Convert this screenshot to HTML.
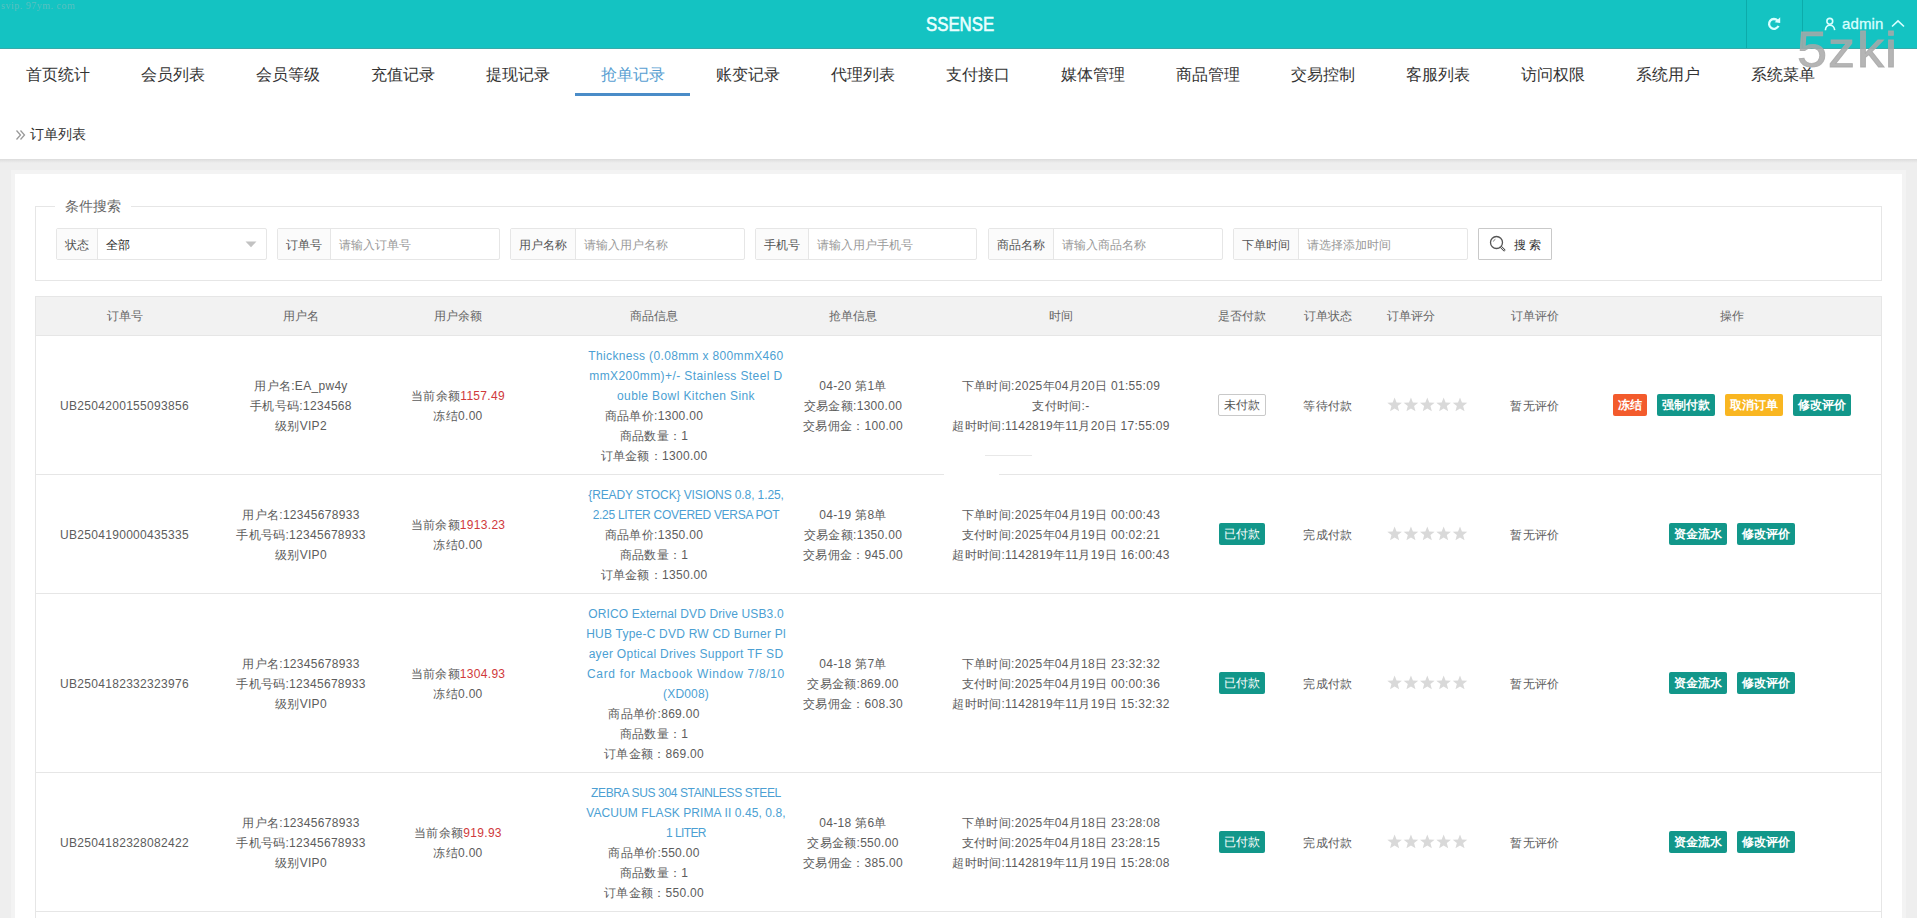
<!DOCTYPE html>
<html><head><meta charset="utf-8"><title>SSENSE</title>
<style>
*{box-sizing:border-box;margin:0;padding:0}
html,body{width:1917px;height:918px;overflow:hidden}
body{position:relative;background:#eeeeee;font-family:"Liberation Sans",sans-serif;color:#666;font-size:12px}
.abs{position:absolute}
#hdr{position:absolute;left:0;top:0;width:1917px;height:49px;background:#14c3c2;border-bottom:1px solid #38aaa9;z-index:1}
#hdr .title{position:absolute;left:0;top:0;width:1917px;text-align:center;line-height:48px;color:#eaffff;font-size:20px}
#hdr .title span{display:inline-block;transform:translate(1.5px,0px) scaleX(0.84);-webkit-text-stroke:0.6px #eaffff}
#hdr .vl{position:absolute;top:0;width:1px;height:48px;background:#0cabaa}
#hdr .admin{position:absolute;left:1842px;top:14px;font-size:15px;line-height:20px;color:#d9ffff;letter-spacing:0.1px;-webkit-text-stroke:0.3px #d9ffff}
#wm1{z-index:2;position:absolute;left:1795px;top:22.5px;width:120px;height:60px;font-size:50.5px;line-height:54px;color:rgba(168,168,168,0.85);-webkit-text-stroke:0.9px rgba(168,168,168,0.85)}
#wm1 span{position:absolute;top:0;display:block;transform:scaleX(1.07);transform-origin:0 0}
#wm0{position:absolute;left:1px;top:0px;font-size:10px;line-height:12px;color:rgba(150,190,190,0.55);font-family:"Liberation Serif",serif;letter-spacing:0.5px}
#nav{position:absolute;left:0;top:48px;width:1917px;height:111px;background:#fff}
#nav .it{position:absolute;top:0;width:115px;height:48px;text-align:center;font-size:16px;line-height:54px;color:#333}
#nav .it.on{color:#5a9fd2}
#nav .ul{position:absolute;left:575px;top:45px;width:115px;height:3px;background:#4a8cc8}
#bc{position:absolute;left:30px;top:125px;font-size:14px;line-height:18px;color:#333}
#bc .arr{color:#999;font-size:13px;margin-right:5px}
#shadow{position:absolute;left:0;top:159px;width:1917px;height:4px;background:linear-gradient(#dcdcdc,#eee)}
#card{position:absolute;left:15px;top:174px;width:1887px;height:760px;background:#fff;box-shadow:0 0 0 4px #f3f3f3}
#fs{position:absolute;left:35px;top:206px;width:1847px;height:75px;border:1px solid #e6e6e6}
#legend{position:absolute;left:55px;top:197px;padding:0 10px;background:#fff;font-size:14px;line-height:18px;color:#666}
.grp{position:absolute;top:228px;height:32px;border:1px solid #e6e6e6;border-radius:2px;background:#fff}
.grp .lb{position:absolute;left:0;top:0;height:30px;padding-top:1px !important;background:#fbfbfb;border-right:1px solid #e6e6e6;line-height:30px;padding:0 8px;color:#555;font-size:12px;white-space:nowrap}
.grp .ph{position:absolute;top:1px;height:30px;line-height:30px;color:#999;font-size:12px;white-space:nowrap}
#btn{position:absolute;left:1478px;top:228px;width:74px;height:32px;border:1px solid #c9c9c9;border-radius:1px;background:#fff;color:#333}
#tbl{position:absolute;left:35px;top:296px;width:1847px;height:640px;border:1px solid #e6e6e6;border-bottom:none}
#th{position:absolute;left:35px;top:296px;width:1847px;height:40px;background:#f2f2f2;border:1px solid #e6e6e6}
.hd{position:absolute;top:297px;height:38px;line-height:38px;text-align:center;color:#666;font-size:12px;white-space:nowrap}
.hl{position:absolute;left:35px;width:1847px;height:1px;background:#e6e6e6}
.row{position:absolute;left:0;width:1917px}
.c{position:absolute;top:1px;height:100%;display:flex;flex-direction:column;justify-content:center;align-items:center;text-align:center;line-height:20px;white-space:nowrap;letter-spacing:0.3px;color:#5c5c5c}
.red{color:#d0393b}
.c.nb{top:0}
.ttl{color:#4c9fd3}
.btn{display:inline-block;height:22px;line-height:22px;padding:0 5px;color:#fff;border-radius:2px;font-size:12px;margin-left:10px;letter-spacing:0;font-weight:bold}
.btn:first-child{margin-left:0}
.badge{display:inline-block;height:22px;line-height:20px;padding:0 5px;border:1px solid #c9c9c9;border-radius:2px;background:#fff;color:#555;letter-spacing:0}
.badge.ok{background:#12978a;border-color:#12978a;color:#fff;line-height:22px;border:none;padding:0 5px}
</style></head><body>

<div id="hdr"><div id="wm0">svip. 97ym. com</div><div class="title"><span>SSENSE</span></div>
<div class="vl" style="left:1746px"></div><div class="vl" style="left:1802px"></div>
<svg class="abs" style="left:1766px;top:16px" width="16" height="16" viewBox="0 0 16 16"><path d="M12.44 9.87 A4.9 4.9 0 1 1 11.6 4.6" fill="none" stroke="#d9ffff" stroke-width="2.3"/><polygon points="14.2,1.2 14.2,7.0 8.6,6.2" fill="#d9ffff"/></svg>
<svg class="abs" style="left:1824px;top:17px" width="13" height="14" viewBox="0 0 13 14"><circle cx="5.8" cy="4.3" r="2.9" fill="none" stroke="#d9ffff" stroke-width="1.6"/><path d="M1.4 13.2 C1.6 10 3.4 8.3 5.9 8.3 C8.4 8.3 10.3 10 10.7 13.2" fill="none" stroke="#d9ffff" stroke-width="1.6"/></svg>
<div class="admin">admin</div>
<svg class="abs" style="left:1891px;top:19px" width="14" height="9" viewBox="0 0 14 9"><path d="M1 7.5 L7 1.8 L13 7.5" fill="none" stroke="#d9ffff" stroke-width="1.6"/></svg>
</div>
<div id="nav">
<div class="it" style="left:0px">首页统计</div>
<div class="it" style="left:115px">会员列表</div>
<div class="it" style="left:230px">会员等级</div>
<div class="it" style="left:345px">充值记录</div>
<div class="it" style="left:460px">提现记录</div>
<div class="it on" style="left:575px">抢单记录</div>
<div class="it" style="left:690px">账变记录</div>
<div class="it" style="left:805px">代理列表</div>
<div class="it" style="left:920px">支付接口</div>
<div class="it" style="left:1035px">媒体管理</div>
<div class="it" style="left:1150px">商品管理</div>
<div class="it" style="left:1265px">交易控制</div>
<div class="it" style="left:1380px">客服列表</div>
<div class="it" style="left:1495px">访问权限</div>
<div class="it" style="left:1610px">系统用户</div>
<div class="it" style="left:1725px">系统菜单</div>
<div class="ul"></div></div>
<div id="wm1"><span style="left:1.5px">5</span><span style="left:33px">z</span><span style="left:61.5px">k</span><span style="left:89.5px">i</span></div>
<svg class="abs" style="left:15px;top:129px" width="11" height="12" viewBox="0 0 11 12"><path d="M1.5 1.5 L5.5 6 L1.5 10.5 M5.5 1.5 L9.5 6 L5.5 10.5" fill="none" stroke="#9a9a9a" stroke-width="1.3"/></svg>
<div id="bc">订单列表</div>
<div id="shadow"></div>
<div id="card"></div>
<div id="fs"></div><div id="legend">条件搜索</div>
<div class="grp" style="left:56px;width:211px"><div class="lb" style="width:41px">状态</div>
<div class="ph" style="left:49px;color:#222">全部</div>
<svg class="abs" style="left:188px;top:12px" width="12" height="7" viewBox="0 0 12 7"><polygon points="0.5,0.5 11.5,0.5 6,6.2" fill="#c2c2c2"/></svg>
</div>
<div class="grp" style="left:277px;width:223px"><div class="lb" style="width:53px">订单号</div>
<div class="ph" style="left:61px">请输入订单号</div>
</div>
<div class="grp" style="left:510px;width:235px"><div class="lb" style="width:65px">用户名称</div>
<div class="ph" style="left:73px">请输入用户名称</div>
</div>
<div class="grp" style="left:755px;width:222px"><div class="lb" style="width:53px">手机号</div>
<div class="ph" style="left:61px">请输入用户手机号</div>
</div>
<div class="grp" style="left:988px;width:235px"><div class="lb" style="width:65px">商品名称</div>
<div class="ph" style="left:73px">请输入商品名称</div>
</div>
<div class="grp" style="left:1233px;width:235px"><div class="lb" style="width:65px">下单时间</div>
<div class="ph" style="left:73px">请选择添加时间</div>
</div>
<div id="btn"><svg class="abs" style="left:10px;top:6px" width="18" height="18" viewBox="0 0 18 18"><circle cx="7.5" cy="7.5" r="6" fill="none" stroke="#555" stroke-width="1.3"/><path d="M12 12 L15.2 15.2" stroke="#555" stroke-width="2.4" stroke-linecap="round"/><path d="M12 12 L15.2 15.2" stroke="#fff" stroke-width="0.8" stroke-linecap="round"/><path d="M4.3 6.6 A3.4 3.4 0 0 1 6.4 4.3" fill="none" stroke="#777" stroke-width="0.9"/></svg><div class="abs" style="left:35px;top:1px;line-height:30px;font-size:12px;white-space:nowrap;letter-spacing:3px">搜索</div></div>
<div id="tbl"></div><div id="th"></div>
<div class="hd" style="left:64.5px;width:120px">订单号</div>
<div class="hd" style="left:241px;width:120px">用户名</div>
<div class="hd" style="left:398px;width:120px">用户余额</div>
<div class="hd" style="left:594px;width:120px">商品信息</div>
<div class="hd" style="left:793px;width:120px">抢单信息</div>
<div class="hd" style="left:1001px;width:120px">时间</div>
<div class="hd" style="left:1181.5px;width:120px">是否付款</div>
<div class="hd" style="left:1268px;width:120px">订单状态</div>
<div class="hd" style="left:1351px;width:120px">订单评分</div>
<div class="hd" style="left:1475px;width:120px">订单评价</div>
<div class="hd" style="left:1672px;width:120px">操作</div>
<div class="hl" style="top:474px"></div>
<div class="hl" style="top:593px"></div>
<div class="hl" style="top:772px"></div>
<div class="hl" style="top:911px"></div>
<div class="abs" style="left:944px;top:474px;width:55px;height:1px;background:#fff;z-index:1"></div>
<div class="abs" style="left:985px;top:455px;width:47px;height:1px;background:#e8e8e8"></div>
<div class="row" style="top:336px;height:138px">
<div class="c" style="left:39.5px;width:170px">UB2504200155093856</div>
<div class="c" style="left:216.0px;width:170px">用户名:EA_pw4y<br>手机号码:1234568<br>级别VIP2</div>
<div class="c" style="left:388.0px;width:140px"><div>当前余额<span class="red">1157.49</span></div><div>冻结0.00</div></div>
<div class="c" style="left:524.0px;width:260px"><div class="ttl" style="transform:translateX(32px)"><div style="letter-spacing:0.34px">Thickness (0.08mm x 800mmX460</div><div style="letter-spacing:0.41px">mmX200mm)+/- Stainless Steel D</div><div style="letter-spacing:0.4px">ouble Bowl Kitchen Sink</div></div><div>商品单价:1300.00</div><div>商品数量：1</div><div>订单金额：1300.00</div></div>
<div class="c" style="left:778.0px;width:150px">04-20 第1单<br>交易金额:1300.00<br>交易佣金：100.00</div>
<div class="c" style="left:931.0px;width:260px">下单时间:2025年04月20日 01:55:09<br>支付时间:-<br>超时时间:1142819年11月20日 17:55:09</div>
<div class="c nb" style="left:1196.5px;width:90px"><span class="badge">未付款</span></div>
<div class="c" style="left:1283.0px;width:90px">等待付款</div>
<div class="c nb" style="left:1387px;width:82px;align-items:flex-start"><svg width="82" height="16" viewBox="0 0 82 16" style="display:block"><polygon points="7.60,0.40 9.54,5.43 14.92,5.72 10.74,9.12 12.13,14.33 7.60,11.40 3.07,14.33 4.46,9.12 0.28,5.72 5.66,5.43" fill="#d9d9d9"/><polygon points="23.95,0.40 25.89,5.43 31.27,5.72 27.09,9.12 28.48,14.33 23.95,11.40 19.42,14.33 20.81,9.12 16.63,5.72 22.01,5.43" fill="#d9d9d9"/><polygon points="40.30,0.40 42.24,5.43 47.62,5.72 43.44,9.12 44.83,14.33 40.30,11.40 35.77,14.33 37.16,9.12 32.98,5.72 38.36,5.43" fill="#d9d9d9"/><polygon points="56.65,0.40 58.59,5.43 63.97,5.72 59.79,9.12 61.18,14.33 56.65,11.40 52.12,14.33 53.51,9.12 49.33,5.72 54.71,5.43" fill="#d9d9d9"/><polygon points="73.00,0.40 74.94,5.43 80.32,5.72 76.14,9.12 77.53,14.33 73.00,11.40 68.47,14.33 69.86,9.12 65.68,5.72 71.06,5.43" fill="#d9d9d9"/></svg></div>
<div class="c" style="left:1485.0px;width:100px">暂无评价</div>
<div class="c nb" style="left:1582.0px;width:300px"><div style="display:flex"><span class="btn" style="background:#f35b2c">冻结</span><span class="btn" style="background:#12978a">强制付款</span><span class="btn" style="background:#f9b621">取消订单</span><span class="btn" style="background:#12978a">修改评价</span></div></div>
</div>
<div class="row" style="top:475px;height:118px">
<div class="c" style="left:39.5px;width:170px">UB2504190000435335</div>
<div class="c" style="left:216.0px;width:170px">用户名:12345678933<br>手机号码:12345678933<br>级别VIP0</div>
<div class="c" style="left:388.0px;width:140px"><div>当前余额<span class="red">1913.23</span></div><div>冻结0.00</div></div>
<div class="c" style="left:524.0px;width:260px"><div class="ttl" style="transform:translateX(32px)"><div style="letter-spacing:-0.11px">{READY STOCK} VISIONS 0.8, 1.25,</div><div style="letter-spacing:-0.29px">2.25 LITER COVERED VERSA POT</div></div><div>商品单价:1350.00</div><div>商品数量：1</div><div>订单金额：1350.00</div></div>
<div class="c" style="left:778.0px;width:150px">04-19 第8单<br>交易金额:1350.00<br>交易佣金：945.00</div>
<div class="c" style="left:931.0px;width:260px">下单时间:2025年04月19日 00:00:43<br>支付时间:2025年04月19日 00:02:21<br>超时时间:1142819年11月19日 16:00:43</div>
<div class="c nb" style="left:1196.5px;width:90px"><span class="badge ok">已付款</span></div>
<div class="c" style="left:1283.0px;width:90px">完成付款</div>
<div class="c nb" style="left:1387px;width:82px;align-items:flex-start"><svg width="82" height="16" viewBox="0 0 82 16" style="display:block"><polygon points="7.60,0.40 9.54,5.43 14.92,5.72 10.74,9.12 12.13,14.33 7.60,11.40 3.07,14.33 4.46,9.12 0.28,5.72 5.66,5.43" fill="#d9d9d9"/><polygon points="23.95,0.40 25.89,5.43 31.27,5.72 27.09,9.12 28.48,14.33 23.95,11.40 19.42,14.33 20.81,9.12 16.63,5.72 22.01,5.43" fill="#d9d9d9"/><polygon points="40.30,0.40 42.24,5.43 47.62,5.72 43.44,9.12 44.83,14.33 40.30,11.40 35.77,14.33 37.16,9.12 32.98,5.72 38.36,5.43" fill="#d9d9d9"/><polygon points="56.65,0.40 58.59,5.43 63.97,5.72 59.79,9.12 61.18,14.33 56.65,11.40 52.12,14.33 53.51,9.12 49.33,5.72 54.71,5.43" fill="#d9d9d9"/><polygon points="73.00,0.40 74.94,5.43 80.32,5.72 76.14,9.12 77.53,14.33 73.00,11.40 68.47,14.33 69.86,9.12 65.68,5.72 71.06,5.43" fill="#d9d9d9"/></svg></div>
<div class="c" style="left:1485.0px;width:100px">暂无评价</div>
<div class="c nb" style="left:1582.0px;width:300px"><div style="display:flex"><span class="btn" style="background:#12978a">资金流水</span><span class="btn" style="background:#12978a">修改评价</span></div></div>
</div>
<div class="row" style="top:594px;height:178px">
<div class="c" style="left:39.5px;width:170px">UB2504182332323976</div>
<div class="c" style="left:216.0px;width:170px">用户名:12345678933<br>手机号码:12345678933<br>级别VIP0</div>
<div class="c" style="left:388.0px;width:140px"><div>当前余额<span class="red">1304.93</span></div><div>冻结0.00</div></div>
<div class="c" style="left:524.0px;width:260px"><div class="ttl" style="transform:translateX(32px)"><div style="letter-spacing:0.13px">ORICO External DVD Drive USB3.0</div><div style="letter-spacing:0.22px">HUB Type-C DVD RW CD Burner Pl</div><div style="letter-spacing:0.31px">ayer Optical Drives Support TF SD</div><div style="letter-spacing:0.66px">Card for Macbook Window 7/8/10</div><div style="letter-spacing:0.17px">(XD008)</div></div><div>商品单价:869.00</div><div>商品数量：1</div><div>订单金额：869.00</div></div>
<div class="c" style="left:778.0px;width:150px">04-18 第7单<br>交易金额:869.00<br>交易佣金：608.30</div>
<div class="c" style="left:931.0px;width:260px">下单时间:2025年04月18日 23:32:32<br>支付时间:2025年04月19日 00:00:36<br>超时时间:1142819年11月19日 15:32:32</div>
<div class="c nb" style="left:1196.5px;width:90px"><span class="badge ok">已付款</span></div>
<div class="c" style="left:1283.0px;width:90px">完成付款</div>
<div class="c nb" style="left:1387px;width:82px;align-items:flex-start"><svg width="82" height="16" viewBox="0 0 82 16" style="display:block"><polygon points="7.60,0.40 9.54,5.43 14.92,5.72 10.74,9.12 12.13,14.33 7.60,11.40 3.07,14.33 4.46,9.12 0.28,5.72 5.66,5.43" fill="#d9d9d9"/><polygon points="23.95,0.40 25.89,5.43 31.27,5.72 27.09,9.12 28.48,14.33 23.95,11.40 19.42,14.33 20.81,9.12 16.63,5.72 22.01,5.43" fill="#d9d9d9"/><polygon points="40.30,0.40 42.24,5.43 47.62,5.72 43.44,9.12 44.83,14.33 40.30,11.40 35.77,14.33 37.16,9.12 32.98,5.72 38.36,5.43" fill="#d9d9d9"/><polygon points="56.65,0.40 58.59,5.43 63.97,5.72 59.79,9.12 61.18,14.33 56.65,11.40 52.12,14.33 53.51,9.12 49.33,5.72 54.71,5.43" fill="#d9d9d9"/><polygon points="73.00,0.40 74.94,5.43 80.32,5.72 76.14,9.12 77.53,14.33 73.00,11.40 68.47,14.33 69.86,9.12 65.68,5.72 71.06,5.43" fill="#d9d9d9"/></svg></div>
<div class="c" style="left:1485.0px;width:100px">暂无评价</div>
<div class="c nb" style="left:1582.0px;width:300px"><div style="display:flex"><span class="btn" style="background:#12978a">资金流水</span><span class="btn" style="background:#12978a">修改评价</span></div></div>
</div>
<div class="row" style="top:773px;height:138px">
<div class="c" style="left:39.5px;width:170px">UB2504182328082422</div>
<div class="c" style="left:216.0px;width:170px">用户名:12345678933<br>手机号码:12345678933<br>级别VIP0</div>
<div class="c" style="left:388.0px;width:140px"><div>当前余额<span class="red">919.93</span></div><div>冻结0.00</div></div>
<div class="c" style="left:524.0px;width:260px"><div class="ttl" style="transform:translateX(32px)"><div style="letter-spacing:-0.37px">ZEBRA SUS 304 STAINLESS STEEL</div><div style="letter-spacing:0.09px">VACUUM FLASK PRIMA II 0.45, 0.8,</div><div style="letter-spacing:-0.6px">1 LITER</div></div><div>商品单价:550.00</div><div>商品数量：1</div><div>订单金额：550.00</div></div>
<div class="c" style="left:778.0px;width:150px">04-18 第6单<br>交易金额:550.00<br>交易佣金：385.00</div>
<div class="c" style="left:931.0px;width:260px">下单时间:2025年04月18日 23:28:08<br>支付时间:2025年04月18日 23:28:15<br>超时时间:1142819年11月19日 15:28:08</div>
<div class="c nb" style="left:1196.5px;width:90px"><span class="badge ok">已付款</span></div>
<div class="c" style="left:1283.0px;width:90px">完成付款</div>
<div class="c nb" style="left:1387px;width:82px;align-items:flex-start"><svg width="82" height="16" viewBox="0 0 82 16" style="display:block"><polygon points="7.60,0.40 9.54,5.43 14.92,5.72 10.74,9.12 12.13,14.33 7.60,11.40 3.07,14.33 4.46,9.12 0.28,5.72 5.66,5.43" fill="#d9d9d9"/><polygon points="23.95,0.40 25.89,5.43 31.27,5.72 27.09,9.12 28.48,14.33 23.95,11.40 19.42,14.33 20.81,9.12 16.63,5.72 22.01,5.43" fill="#d9d9d9"/><polygon points="40.30,0.40 42.24,5.43 47.62,5.72 43.44,9.12 44.83,14.33 40.30,11.40 35.77,14.33 37.16,9.12 32.98,5.72 38.36,5.43" fill="#d9d9d9"/><polygon points="56.65,0.40 58.59,5.43 63.97,5.72 59.79,9.12 61.18,14.33 56.65,11.40 52.12,14.33 53.51,9.12 49.33,5.72 54.71,5.43" fill="#d9d9d9"/><polygon points="73.00,0.40 74.94,5.43 80.32,5.72 76.14,9.12 77.53,14.33 73.00,11.40 68.47,14.33 69.86,9.12 65.68,5.72 71.06,5.43" fill="#d9d9d9"/></svg></div>
<div class="c" style="left:1485.0px;width:100px">暂无评价</div>
<div class="c nb" style="left:1582.0px;width:300px"><div style="display:flex"><span class="btn" style="background:#12978a">资金流水</span><span class="btn" style="background:#12978a">修改评价</span></div></div>
</div>
</body></html>
